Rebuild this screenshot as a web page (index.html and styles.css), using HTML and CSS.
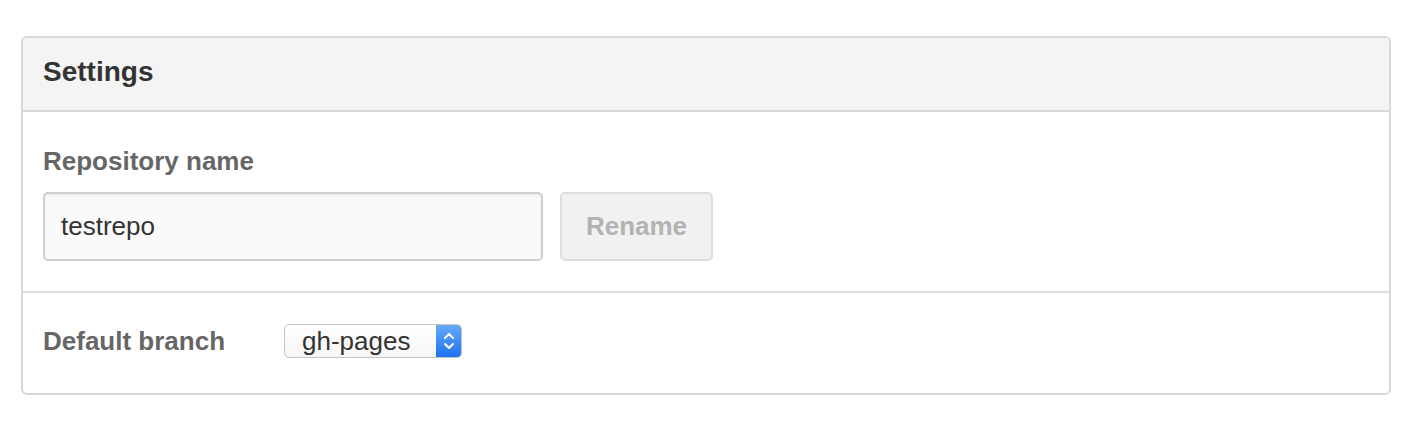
FILE: index.html
```html
<!DOCTYPE html>
<html>
<head>
<meta charset="utf-8">
<link rel="stylesheet" href="styles.css">
</head>
<body>
<div class="page">
  <div class="box">
    <div class="box-header">Settings</div>
    <div class="section">
      <div class="field-label">Repository name</div>
      <div class="rename-row">
        <div class="text-input">testrepo</div>
        <div class="btn-disabled">Rename</div>
      </div>
    </div>
    <div class="section section-branch">
      <div class="branch-label">Default branch</div>
      <div class="select">
        <span class="select-value">gh-pages</span>
        <span class="stepper">
          <svg width="14" height="22" viewBox="0 0 14 22"><path d="M3 8 L7 4 L11 8" fill="none" stroke="#fff" stroke-width="2" stroke-linecap="round" stroke-linejoin="round"/><path d="M3 14 L7 18 L11 14" fill="none" stroke="#fff" stroke-width="2" stroke-linecap="round" stroke-linejoin="round"/></svg>
        </span>
      </div>
    </div>
  </div>
</div>
</body>
</html>
```
FILE: styles.css
```css
html, body {
  margin: 0;
  padding: 0;
  background: #fff;
}
body {
  font-family: "Liberation Sans", Arial, sans-serif;
  color: #333;
}
.page {
  padding: 36px 0 0 21px;
}
.box {
  width: 1366px;
  border: 2px solid #d8d8d8;
  border-radius: 6px;
  overflow: hidden;
}
.box-header {
  box-sizing: border-box;
  background: #f4f4f4;
  border-bottom: 2px solid #d8d8d8;
  height: 74px;
  padding: 0 20px 4px;
  display: flex;
  align-items: center;
  font-size: 28px;
  font-weight: bold;
  color: #333;
}
.section {
  padding: 34px 20px 30px;
  border-bottom: 2px solid #dedede;
}
.field-label {
  font-size: 26px;
  line-height: 30px;
  font-weight: bold;
  color: #666;
  margin-bottom: 16px;
}
.rename-row {
  display: flex;
  gap: 17px;
}
.text-input {
  width: 500px;
  height: 69px;
  box-sizing: border-box;
  border: 2px solid #cfcfcf;
  border-radius: 5px;
  background: #fafafa;
  box-shadow: inset 0 2px 3px rgba(0,0,0,0.05);
  padding: 0 16px;
  display: flex;
  align-items: center;
  font-size: 26px;
  color: #333;
}
.btn-disabled {
  width: 153px;
  height: 69px;
  box-sizing: border-box;
  border: 2px solid #dedede;
  border-radius: 5px;
  background: #f1f1f1;
  display: flex;
  align-items: center;
  justify-content: center;
  font-size: 26px;
  font-weight: bold;
  color: #b3b3b3;
}
.section-branch {
  border-bottom: none;
  padding: 31px 20px 35px;
  display: flex;
  align-items: center;
}
.branch-label {
  width: 241px;
  font-size: 26px;
  font-weight: bold;
  color: #666;
}
.select {
  width: 178px;
  height: 34px;
  box-sizing: border-box;
  display: flex;
  border: 1px solid #c4c4c4;
  border-radius: 5px;
  background: linear-gradient(#ffffff, #f6f6f6);
  overflow: hidden;
}
.select-value {
  flex: 1;
  display: flex;
  align-items: center;
  padding-left: 17px;
  font-size: 26px;
  color: #333;
}
.stepper {
  width: 26px;
  background: linear-gradient(#68acf8, #1d6ff0);
  display: flex;
  align-items: center;
  justify-content: center;
  margin: -1px -1px -1px 0;
  border-radius: 0 5px 5px 0;
}
```
